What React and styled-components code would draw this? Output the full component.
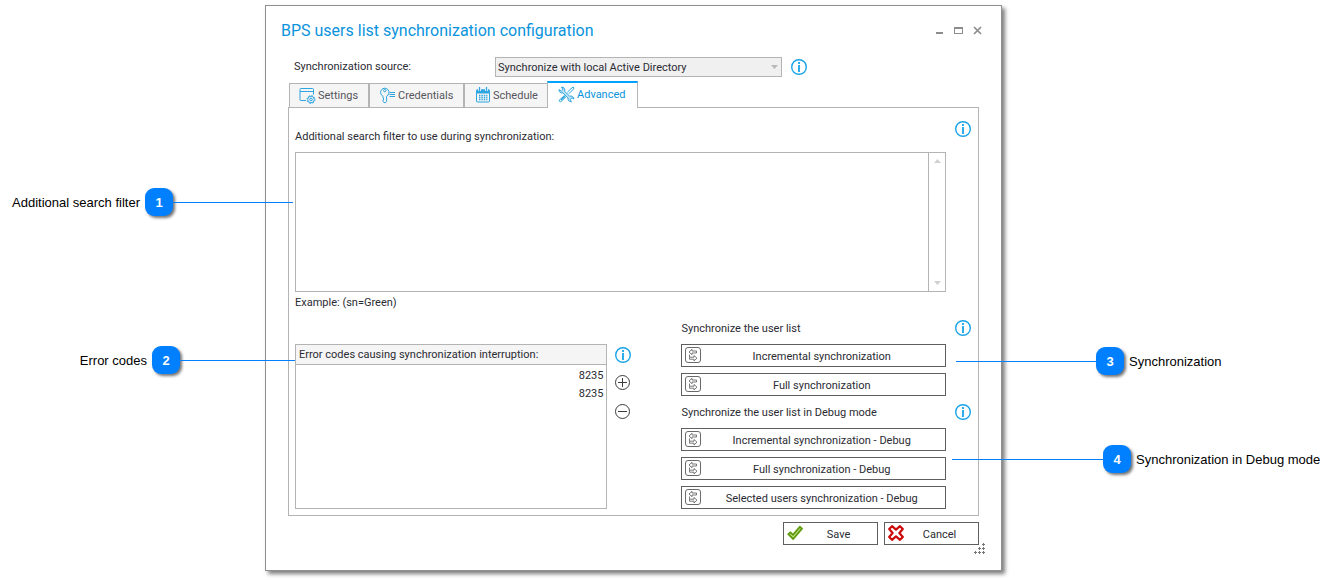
import React, { useState } from 'react';
import styled, { createGlobalStyle, css } from 'styled-components';

const GlobalStyle = createGlobalStyle`
  * {
    box-sizing: border-box;
  }

  body {
    --blue: #0a93dc;
    --info: #18a3e8;
    --marker: #007fff;
    --line: #b4b4b4;
    --dark-line: #5f5f5f;
    --text: #2b2b33;
    margin: 0;
    background-color: #fff;
    color: var(--text);
    font-family: Roboto, 'DejaVu Sans Condensed', sans-serif;
    font-size: 11px;
    line-height: 16px;
  }

  button, select, textarea {
    font: inherit;
    color: inherit;
    margin: 0;
  }
`;

const Page = styled.div`
  display: grid;
  grid-template-columns: 265px minmax(640px, 1fr) 334px;
  align-items: start;
  padding: 5px 0 9px;
`;

/* callouts */

const Callouts = styled.aside`
  position: relative;
  z-index: 1;
  display: flex;
  flex-direction: column;
  gap: ${({ $gap }) => $gap};
  padding-top: ${({ $top }) => $top};
  color: #000;
  font-family: 'Liberation Sans', Arial, sans-serif;
  font-size: 13px;
  pointer-events: none;
`;

const Callout = styled.div`
  display: flex;
  align-items: center;
  white-space: nowrap;
`;

const LeftCallout = styled(Callout)`
  justify-content: flex-end;
  margin-right: ${({ $reach }) => `-${$reach}px`};
`;

const RightCallout = styled(Callout)`
  margin-left: ${({ $reach }) => `-${$reach}px`};
`;

const CalloutLabel = styled.span`
  padding: 1px 5px 0;
`;

const Marker = styled.span`
  display: flex;
  flex: none;
  align-items: center;
  justify-content: center;
  width: 28px;
  height: 28px;
  padding-top: 1px;
  border-radius: 9px;
  background-color: var(--marker);
  box-shadow: 2px 2px 3px rgba(0, 0, 0, 0.55);
  color: #fff;
  font-weight: 700;
`;

const Leader = styled.span`
  flex: none;
  width: ${({ $length }) => $length}px;
  height: 1px;
  background-color: var(--marker);
`;

/* window */

const Window = styled.main`
  position: relative;
  padding: 15px 22px 25px;
  border: 1px solid #8f8f8f;
  background-color: #fff;
  box-shadow: 3px 3px 4px rgba(0, 0, 0, 0.5);
`;

const TitleBar = styled.header`
  display: flex;
  align-items: flex-start;
  justify-content: space-between;
  margin: 0 -7px 16px;
`;

const Title = styled.h1`
  margin: 0;
  color: var(--blue);
  font-size: 16px;
  font-weight: 400;
  line-height: 20px;
`;

const WindowButtons = styled.div`
  display: flex;
  gap: 3px;
  padding-top: 1px;
`;

const IconButton = styled.button`
  display: flex;
  flex: none;
  align-items: center;
  justify-content: center;
  width: 16px;
  height: 16px;
  padding: 0;
  border: 0;
  background: none;
`;

const SourceRow = styled.div`
  display: flex;
  align-items: center;
  height: 20px;
  margin-bottom: 4px;
  padding-left: 6px;
`;

const SourceLabel = styled.label`
  width: 201px;
`;

const SelectBox = styled.div`
  position: relative;
  width: 287px;
  margin-right: 9px;
`;

const Select = styled.select`
  display: block;
  width: 100%;
  height: 20px;
  padding: 1px 16px 0 2px;
  border: 1px solid var(--line);
  border-radius: 0;
  background-color: #f0f0f0;
  appearance: none;
`;

const SelectArrow = styled.svg`
  position: absolute;
  top: 8px;
  right: 4px;
  pointer-events: none;
`;

const Tabs = styled.div`
  display: flex;
  align-items: flex-end;
  margin: 0 0 -1px 1px;
`;

const Tab = styled.button`
  display: flex;
  align-items: center;
  gap: 2px;
  width: ${({ $width }) => $width}px;
  height: 25px;
  padding: 0 0 0 9px;
  border: 1px solid var(--line);
  background-color: #f5f5f5;
  color: #55555c;
  white-space: nowrap;

  ${({ $active }) =>
    $active &&
    css`
      position: relative;
      height: 27px;
      margin-left: -1px;
      padding: 0 0 2px 10px;
      border-top: 2px solid #00a2ff;
      border-bottom: 0;
      background-color: #fff;
      color: var(--blue);
    `}
`;

const Panel = styled.section`
  padding: 13px 7px 6px 6px;
  border: 1px solid var(--line);
`;

const FilterHeader = styled.div`
  display: flex;
  align-items: flex-start;
  justify-content: space-between;
  height: 31px;
`;

const FilterLabel = styled.label`
  padding-top: 8px;
`;

const FilterBox = styled.div`
  display: flex;
  height: 140px;
  margin-right: 25px;
  border: 1px solid var(--line);
`;

const FilterInput = styled.textarea`
  flex: 1;
  min-width: 0;
  padding: 3px;
  border: 0;
  background: none;
  outline: 0;
  overflow: hidden;
  resize: none;
`;

const ScrollBar = styled.div`
  display: flex;
  flex-direction: column;
  justify-content: space-between;
  width: 17px;
  border-left: 1px solid var(--line);
`;

const Example = styled.p`
  margin: 3px 0 9px;
`;

const Lower = styled.div`
  display: flex;
`;

const ErrorBox = styled.div`
  flex: 312 1 0;
  margin-top: 24px;
  border: 1px solid var(--line);
`;

const ErrorTable = styled.table`
  width: 100%;
  border-spacing: 0;

  th {
    height: 20px;
    padding: 1px 3px 0;
    border-bottom: 1px solid var(--line);
    background-color: #f5f5f5;
    font-weight: 400;
    text-align: left;
  }

  td {
    padding: 4px 3px 0;
    line-height: 14px;
    text-align: right;
  }
`;

const ErrorActions = styled.div`
  display: flex;
  flex-direction: column;
  gap: 12px;
  margin: 27px 50px 0 8px;
`;

const SyncColumn = styled.div`
  display: flex;
  flex: 291 1 0;
  flex-direction: column;
  gap: 8px;
`;

const SyncHeader = styled.div`
  display: flex;
  justify-content: space-between;
  height: 16px;
  margin-bottom: 8px;
`;

const SyncTitle = styled.h2`
  margin: 0;
  padding-top: 1px;
  font-size: 11px;
  font-weight: 400;
`;

const SyncButtons = styled.div`
  display: flex;
  flex-direction: column;
  gap: 6px;
  margin-right: 25px;
`;

const Button = styled.button`
  display: flex;
  align-items: flex-start;
  height: 23px;
  padding: 2px 3px;
  border: 1px solid var(--dark-line);
  background-color: #fff;
  white-space: nowrap;

  span {
    flex: 1;
    padding-top: 2px;
    text-align: center;
  }
`;

const FooterButton = styled(Button)`
  width: 95px;
`;

const Footer = styled.footer`
  display: flex;
  justify-content: flex-end;
  gap: 6px;
  padding-top: 6px;
`;

const Grip = styled.svg`
  position: absolute;
  right: 16px;
  bottom: 16px;
`;

function InfoButton({ label }) {
  return (
    <IconButton type="button" aria-label={label}>
      <svg width="16" height="16" viewBox="0 0 16 16" fill="none" stroke="var(--info)">
        <circle cx="8" cy="8" r="7.3" strokeWidth="1.4" />
        <path d="M8 6V13" strokeWidth="1.8" />
        <path d="M8 3V5" strokeWidth="1.8" />
      </svg>
    </IconButton>
  );
}

function SyncIcon() {
  return (
    <svg width="16" height="16" viewBox="0 0 16 16" fill="none" stroke="#6a6a6a">
      <rect x="0.5" y="0.5" width="15" height="15" rx="2.5" />
      <path
        d="M4 5 7 2.3V4H11.5V6H7V7.7ZM4.5 7.5V10M12 11.2 9 8.5V10.2H4.5V12.2H9V13.9Z"
        strokeWidth="0.9"
      />
    </svg>
  );
}

function SettingsIcon() {
  return (
    <svg width="17" height="17" viewBox="0 0 17 17" fill="none" stroke="#2ca5e0">
      <path d="M7 13.5H2Q1 13.5 1 12.5V2.5Q1 1.5 2 1.5H13.5Q14.5 1.5 14.5 2.5V7.5M1 4.5H14.5" />
      <circle cx="12" cy="12.5" r="1.3" />
      <circle cx="12" cy="12.5" r="3.3" />
      <circle cx="12" cy="12.5" r="4" strokeDasharray="1.4 1.74" />
    </svg>
  );
}

function KeyIcon() {
  return (
    <svg width="17" height="17" viewBox="0 0 17 17" fill="none" stroke="#2ca5e0">
      <path d="M4 9.2A4.2 4.2 0 1 1 7.6 9.2V14.5L6 16 4 14.5V13L5 12 4 11Z" />
      <circle cx="5.8" cy="3.6" r="1.2" />
      <path d="M10.5 5.5H16M10.5 7.5H16M10.5 9.5H16" />
    </svg>
  );
}

function CalendarIcon() {
  return (
    <svg width="17" height="17" viewBox="-1 0 17 17" fill="none" stroke="#2ca5e0">
      <rect x="1.5" y="3" width="13" height="12" rx="1" />
      <path d="M1.5 4.5H14.5" strokeWidth="4" />
      <path d="M4.5 0V4M11.5 0V4" stroke="#fff" strokeWidth="3" />
      <path d="M4.5 0V4M11.5 0V4" strokeWidth="1.4" />
      <path d="M4 8.5H12.4M4 10.5H12.4M4 12.5H12.4" strokeDasharray="1.4 1" strokeWidth="1.3" />
    </svg>
  );
}

function ToolsIcon() {
  return (
    <svg width="17" height="17" viewBox="0 0 17 17" fill="none" stroke="#2ca5e0">
      <path
        d="M1 3.5 3.2 5.2 5 3.4 3.4 1.2Q6.5 .8 7 4L6.6 5.2 11.6 10.2Q15.5 9.4 16 13L14 11.8 12.2 13.5 13.4 15.8Q9.6 15.6 10 11.9L5 6.9Q1.2 7.4 1 3.5Z"
        fill="#bfe3f6"
      />
      <path d="M9.3 6.3 13 2.7 15 1 16.1 2.1 14.5 4.1 10.8 7.8M6.6 9.3 1.2 14.2Q1 15.8 2.8 15.7L8 10.8" />
      <path d="M3 14 6.8 10.2" strokeWidth="1.5" />
    </svg>
  );
}

const tabs = [
  { name: 'Settings', icon: SettingsIcon, width: 80 },
  { name: 'Credentials', icon: KeyIcon, width: 95 },
  { name: 'Schedule', icon: CalendarIcon, width: 84 },
  { name: 'Advanced', icon: ToolsIcon, width: 91 },
];

const syncGroups = [
  {
    title: 'Synchronize the user list',
    actions: ['Incremental synchronization', 'Full synchronization'],
  },
  {
    title: 'Synchronize the user list in Debug mode',
    actions: [
      'Incremental synchronization - Debug',
      'Full synchronization - Debug',
      'Selected users synchronization - Debug',
    ],
  },
];

const errorCodes = ['8235', '8235'];

export default function App() {
  const [filter, setFilter] = useState('');

  return (
    <>
      <GlobalStyle />
      <Page>
        <Callouts $top="183px" $gap="130px">
          <LeftCallout $reach={28}>
            <CalloutLabel>Additional search filter</CalloutLabel>
            <Marker>1</Marker>
            <Leader $length={120} />
          </LeftCallout>
          <LeftCallout $reach={30}>
            <CalloutLabel>Error codes</CalloutLabel>
            <Marker>2</Marker>
            <Leader $length={115} />
          </LeftCallout>
        </Callouts>

        <Window>
          <TitleBar>
            <Title>BPS users list synchronization configuration</Title>
            <WindowButtons>
              <IconButton type="button" aria-label="Minimize">
                <svg width="16" height="16" viewBox="0 0 16 16">
                  <path d="M4 10H11V12H4Z" fill="#8c8c8c" />
                </svg>
              </IconButton>
              <IconButton type="button" aria-label="Maximize">
                <svg width="16" height="16" viewBox="0 0 16 16">
                  <path d="M3 5H12V12H3ZM4 7V11H11V7Z" fill="#8c8c8c" fillRule="evenodd" />
                </svg>
              </IconButton>
              <IconButton type="button" aria-label="Close">
                <svg width="16" height="16" viewBox="0 0 16 16">
                  <path d="M4 5 11 12M11 5 4 12" stroke="#8c8c8c" strokeWidth="1.7" />
                </svg>
              </IconButton>
            </WindowButtons>
          </TitleBar>

          <SourceRow>
            <SourceLabel htmlFor="source">Synchronization source:</SourceLabel>
            <SelectBox>
              <Select id="source">
                <option>Synchronize with local Active Directory</option>
              </Select>
              <SelectArrow width="7" height="4" viewBox="0 0 7 4">
                <path d="M0 0H7L3.5 4Z" fill="#b9b9b9" />
              </SelectArrow>
            </SelectBox>
            <InfoButton label="About the synchronization source" />
          </SourceRow>

          <Tabs role="tablist">
            {tabs.map(({ name, icon: Icon, width }) => (
              <Tab
                key={name}
                type="button"
                role="tab"
                aria-selected={name === 'Advanced'}
                $active={name === 'Advanced'}
                $width={width}
              >
                <Icon />
                {name}
              </Tab>
            ))}
          </Tabs>

          <Panel>
            <FilterHeader>
              <FilterLabel htmlFor="filter">
                Additional search filter to use during synchronization:
              </FilterLabel>
              <InfoButton label="About the search filter" />
            </FilterHeader>
            <FilterBox>
              <FilterInput
                id="filter"
                value={filter}
                onChange={(e) => setFilter(e.target.value)}
              />
              <ScrollBar>
                <IconButton type="button" aria-label="Scroll up">
                  <svg width="7" height="4" viewBox="0 0 7 4">
                    <path d="M0 4H7L3.5 0Z" fill="#d0d0d0" />
                  </svg>
                </IconButton>
                <IconButton type="button" aria-label="Scroll down">
                  <svg width="7" height="4" viewBox="0 0 7 4">
                    <path d="M0 0H7L3.5 4Z" fill="#d0d0d0" />
                  </svg>
                </IconButton>
              </ScrollBar>
            </FilterBox>
            <Example>Example: (sn=Green)</Example>

            <Lower>
              <ErrorBox>
                <ErrorTable>
                  <thead>
                    <tr>
                      <th>Error codes causing synchronization interruption:</th>
                    </tr>
                  </thead>
                  <tbody>
                    {errorCodes.map((code, i) => (
                      <tr key={i}>
                        <td>{code}</td>
                      </tr>
                    ))}
                  </tbody>
                </ErrorTable>
              </ErrorBox>
              <ErrorActions>
                <InfoButton label="About the error codes" />
                <IconButton type="button" aria-label="Add error code">
                  <svg width="16" height="16" viewBox="0 0 16 16" fill="none" stroke="#3c3c3c">
                    <circle cx="7.5" cy="7.5" r="7" />
                    <path d="M3 7.5H12M7.5 3V12" />
                  </svg>
                </IconButton>
                <IconButton type="button" aria-label="Remove error code">
                  <svg width="16" height="16" viewBox="0 0 16 16" fill="none" stroke="#3c3c3c">
                    <circle cx="7.5" cy="8.5" r="7" />
                    <path d="M3 8.5H12" />
                  </svg>
                </IconButton>
              </ErrorActions>
              <SyncColumn>
                {syncGroups.map(({ title, actions }) => (
                  <div key={title}>
                    <SyncHeader>
                      <SyncTitle>{title}</SyncTitle>
                      <InfoButton label={`About: ${title}`} />
                    </SyncHeader>
                    <SyncButtons>
                      {actions.map((action) => (
                        <Button key={action} type="button">
                          <SyncIcon />
                          <span>{action}</span>
                        </Button>
                      ))}
                    </SyncButtons>
                  </div>
                ))}
              </SyncColumn>
            </Lower>
          </Panel>

          <Footer>
            <FooterButton type="button">
              <svg width="16" height="16" viewBox="0 0 16 16">
                <path
                  d="M1.3 9.2 3.4 7.3 6 9.8 12.8 1.8 15 3.6 6.2 14Z"
                  fill="#c7e08c"
                  stroke="#5f9a0c"
                  strokeWidth="1.8"
                  strokeLinejoin="round"
                />
              </svg>
              <span>Save</span>
            </FooterButton>
            <FooterButton type="button">
              <svg width="16" height="16" viewBox="0 0 16 16">
                <path
                  d="M4 1.2 8 4.6 12 1.2 14.8 4 11.4 8 14.8 12 12 14.8 8 11.4 4 14.8 1.2 12 4.6 8 1.2 4Z"
                  fill="#fff"
                  stroke="#cc0a0a"
                  strokeWidth="2.2"
                  strokeLinejoin="round"
                />
              </svg>
              <span>Cancel</span>
            </FooterButton>
          </Footer>

          <Grip width="11" height="11" viewBox="0 0 11 11" stroke="#777">
            <path d="M8 1.5H11M9.5 0V3M4 5.5H7M5.5 4V7M8 5.5H11M9.5 4V7M0 9.5H3M1.5 8V11M4 9.5H7M5.5 8V11M8 9.5H11M9.5 8V11" />
          </Grip>
        </Window>

        <Callouts $top="342px" $gap="70px">
          <RightCallout $reach={46}>
            <Leader $length={140} />
            <Marker>3</Marker>
            <CalloutLabel>Synchronization</CalloutLabel>
          </RightCallout>
          <RightCallout $reach={50}>
            <Leader $length={151} />
            <Marker>4</Marker>
            <CalloutLabel>Synchronization in Debug mode</CalloutLabel>
          </RightCallout>
        </Callouts>
      </Page>
    </>
  );
}
